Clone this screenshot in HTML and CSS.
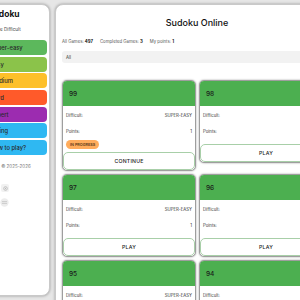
FILE: index.html
```html
<!DOCTYPE html>
<html>
<head>
<meta charset="utf-8">
<link rel="stylesheet" href="styles.css">
</head>
<body>
<div class="layout">
  <aside class="sidebar">
    <h1 class="brand">Sudoku</h1>
    <div class="choose">Choose Difficult</div>
    <nav class="levels">
      <a class="lvl super">Super-easy</a>
      <a class="lvl easy">Easy</a>
      <a class="lvl medium">Medium</a>
      <a class="lvl hard">Hard</a>
      <a class="lvl expert">Expert</a>
      <a class="lvl info">Rating</a>
      <a class="lvl info">How to play?</a>
    </nav>
    <div class="copy">Made © 2025-2026</div>
    <div class="tool gear">
      <svg viewBox="0 0 10 10" width="7" height="7"><circle cx="5" cy="5" r="2.6" fill="none" stroke="#b9b9b9" stroke-width="1.2"/><circle cx="5" cy="5" r="0.9" fill="#b9b9b9"/></svg>
    </div>
    <div class="tool round">
      <svg viewBox="0 0 10 10" width="9" height="9"><circle cx="5" cy="5" r="4.6" fill="#ececec"/><path d="M2.2 4h5.6M2.2 6h5.6" stroke="#c4c4c4" stroke-width="0.9"/></svg>
    </div>
  </aside>
  <main class="main">
    <h2 class="title">Sudoku Online</h2>
    <div class="stats">
      <span>All Games: <b>497</b></span>
      <span>Completed Games: <b>3</b></span>
      <span>My points: <b>1</b></span>
    </div>
    <div class="filter">All</div>
    <div class="grid">
      <div class="card">
        <div class="card-head">99</div>
        <div class="card-body">
          <div class="row"><span>Difficult:</span><span>SUPER-EASY</span></div>
          <div class="row"><span>Points:</span><span>1</span></div>
          <span class="badge">IN PROGRESS</span>
        </div>
        <button class="btn">CONTINUE</button>
      </div>
      <div class="card">
        <div class="card-head">98</div>
        <div class="card-body">
          <div class="row"><span>Difficult:</span><span>SUPER-EASY</span></div>
          <div class="row"><span>Points:</span><span>1</span></div>
        </div>
        <button class="btn">PLAY</button>
      </div>
      <div class="card">
        <div class="card-head">97</div>
        <div class="card-body">
          <div class="row"><span>Difficult:</span><span>SUPER-EASY</span></div>
          <div class="row"><span>Points:</span><span>1</span></div>
        </div>
        <button class="btn">PLAY</button>
      </div>
      <div class="card">
        <div class="card-head">96</div>
        <div class="card-body">
          <div class="row"><span>Difficult:</span><span>SUPER-EASY</span></div>
          <div class="row"><span>Points:</span><span>1</span></div>
        </div>
        <button class="btn">PLAY</button>
      </div>
      <div class="card">
        <div class="card-head">95</div>
        <div class="card-body">
          <div class="row"><span>Difficult:</span><span>SUPER-EASY</span></div>
          <div class="row"><span>Points:</span><span>1</span></div>
        </div>
        <button class="btn">PLAY</button>
      </div>
      <div class="card">
        <div class="card-head">94</div>
        <div class="card-body">
          <div class="row"><span>Difficult:</span><span>SUPER-EASY</span></div>
          <div class="row"><span>Points:</span><span>1</span></div>
        </div>
        <button class="btn">PLAY</button>
      </div>
    </div>
  </main>
</div>
</body>
</html>
```
FILE: styles.css
```css
* { box-sizing: border-box; }
html, body { margin: 0; padding: 0; }
body {
  background: #e6e6e6;
  font-family: Inter, "Noto Sans", sans-serif;
  color: #222;
  width: 300px;
  height: 300px;
  overflow: hidden;
}
.layout {
  display: flex;
  gap: 5px;
  width: 365px;
  margin-left: -20px;
  padding-top: 4px;
  align-items: flex-start;
}
.sidebar {
  width: 70px;
  flex: none;
  height: 292px;
  background: #fff;
  border: 1px solid #c9c9c9;
  border-radius: 8px;
  box-shadow: 0 0 3px rgba(0,0,0,0.35);
  padding: 4px 2px 0 7px;
  display: flex;
  flex-direction: column;
}
.brand {
  margin: 0;
  font-size: 8.5px;
  line-height: 10px;
  font-weight: 700;
  color: #111;
  margin-left: 0;
}
.choose {
  margin-top: 8px;
  font-size: 4.6px;
  line-height: 6px;
  color: #444;
  margin-left: -2px;
}
.levels {
  margin-top: 7px;
  display: flex;
  flex-direction: column;
  gap: 1.7px;
}
.lvl {
  display: flex;
  align-items: center;
  height: 15px;
  border-radius: 4px;
  padding-left: 2.5px;
  font-size: 5.8px;
  font-weight: 500;
  color: #2a2a2a;
}
.super { background: #5cb85c; }
.easy { background: #8bc34a; }
.medium { background: #fdc02a; }
.hard { background: #ff5a2a; }
.expert { background: #9c2cb0; }
.info { background: #2fb8f2; }
.copy {
  margin-top: 9px;
  font-size: 4.5px;
  line-height: 6px;
  color: #777;
}
.tool {
  display: flex;
  align-items: center;
  justify-content: center;
}
.gear {
  margin-top: 14px;
  width: 8px;
  height: 8px;
  background: #f1f1f1;
  border-radius: 2px;
  margin-left: 13px;
}
.round {
  margin-top: 6px;
  width: 9px;
  height: 9px;
  margin-left: 12px;
}
.main {
  width: 284px;
  flex: none;
  height: 320px;
  background: #fff;
  border: 1px solid #c9c9c9;
  border-radius: 8px;
  box-shadow: 0 0 3px rgba(0,0,0,0.35);
  padding: 0 6px;
}
.title {
  margin: 12px 0 0;
  text-align: center;
  font-size: 9px;
  line-height: 12px;
  font-weight: 500;
  color: #111;
}
.stats {
  margin-top: 10px;
  display: flex;
  gap: 7px;
  font-size: 4.3px;
  line-height: 6px;
  color: #555;
}
.stats b { color: #111; font-weight: 700; }
.filter {
  margin-top: 6px;
  height: 12px;
  background: #f2f2f2;
  border-radius: 3px;
  padding-left: 4px;
  display: flex;
  align-items: center;
  font-size: 4.3px;
  color: #333;
}
.grid {
  margin-top: 17px;
  display: grid;
  grid-template-columns: 134px 134px;
  column-gap: 3px;
  row-gap: 3px;
  align-items: start;
}
.card {
  background: #fff;
  border: 1px solid #9e9e9e;
  border-radius: 5px;
  box-shadow: 0 0 2px rgba(0,0,0,0.4);
  overflow: hidden;
  display: flex;
  flex-direction: column;
}
.card-head {
  background: #4caf50;
  height: 25px;
  padding-left: 6px;
  display: flex;
  align-items: center;
  font-size: 6.5px;
  font-weight: 500;
  color: #1b1b1b;
}
.card-body {
  padding: 1px 3px 0 3px;
  display: flex;
  flex-direction: column;
  align-items: flex-start;
}
.row {
  width: 100%;
  height: 16px;
  display: flex;
  justify-content: space-between;
  align-items: center;
  font-size: 4.3px;
  color: #333;
}
.badge {
  margin-top: 1px;
  margin-bottom: -2px;
  height: 9px;
  padding: 0 4px;
  display: flex;
  align-items: center;
  background: #ffac5c;
  border-radius: 5px;
  font-size: 3.8px;
  font-weight: 600;
  color: #5a3a1a;
}
.btn {
  margin-top: 5px;
  height: 18px;
  width: 100%;
  background: #fff;
  border: 1px solid #a8cfa8;
  border-radius: 5px;
  font-family: Inter, "Noto Sans", sans-serif;
  font-size: 5.2px;
  font-weight: 500;
  letter-spacing: 0.2px;
  color: #222;
  padding: 0;
}
```
